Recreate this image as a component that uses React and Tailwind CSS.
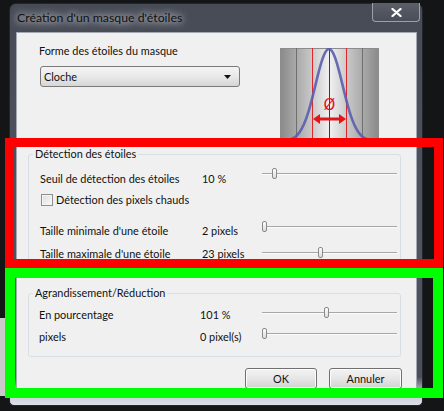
import React from "react";

// bell curve drawn into the preview panel
function bellPath() {
  const pts = [];
  for (let x = 0; x <= 98; x += 1) {
    const d = x - 49;
    const y = 1 + 92 * (1 - Math.exp(-(d * d) / (2 * 13.6 * 13.6)));
    pts.push(`${x === 0 ? "M" : "L"}${x},${y.toFixed(2)}`);
  }
  return pts.join(" ");
}

function Preview() {
  return (
    <svg width="99" height="96" viewBox="0 0 99 96" className="block">
      <defs>
        <linearGradient id="cyl" x1="0" y1="0" x2="1" y2="0">
          <stop offset="0" stopColor="#8a8a8a" />
          <stop offset="0.3" stopColor="#c4c4c4" />
          <stop offset="0.5" stopColor="#f1f1f1" />
          <stop offset="0.7" stopColor="#c4c4c4" />
          <stop offset="1" stopColor="#8a8a8a" />
        </linearGradient>
      </defs>
      <rect x="0.5" y="0.5" width="98" height="95" fill="url(#cyl)" stroke="#8c8c8c" />
      <line x1="16.5" y1="0" x2="16.5" y2="96" stroke="#6f6f6f" strokeWidth="1" />
      <line x1="82.5" y1="0" x2="82.5" y2="96" stroke="#6f6f6f" strokeWidth="1" />
      <line x1="32.5" y1="0" x2="32.5" y2="96" stroke="#e0262a" strokeWidth="1" />
      <line x1="66.5" y1="0" x2="66.5" y2="96" stroke="#e0262a" strokeWidth="1" />
      <line x1="49.5" y1="0" x2="49.5" y2="96" stroke="#3a3a3a" strokeWidth="1" />
      <path d={bellPath()} fill="none" stroke="#5a5eae" strokeWidth="2.6" strokeOpacity="0.9" />
      <text x="49.5" y="62" textAnchor="middle" fontSize="15" fill="#e3141a" fontFamily="DejaVu Sans, sans-serif">Ø</text>
      <line x1="39" y1="71" x2="60" y2="71" stroke="#e3141a" strokeWidth="3" />
      <polygon points="33,71 40,66 40,76" fill="#e3141a" />
      <polygon points="66,71 59,66 59,76" fill="#e3141a" />
    </svg>
  );
}

function Slider({ thumb, lift }) {
  return (
    <div className={`relative h-[12px] w-[135px] ${lift}`}>
      <div className="mt-[5px] h-[1px] bg-[#a7a7a7]" />
      <div className="h-[1px] bg-[#fbfbfb]" />
      <div
        className="absolute top-0 h-[11px] w-[5px] rounded-[2px] border border-[#8a8a8a] bg-gradient-to-b from-[#fdfdfd] to-[#dcdcdc]"
        style={{ left: thumb }}
      />
    </div>
  );
}

function Row({ label, value, thumb, lift, labelW, valueW }) {
  return (
    <div className="flex h-[20px] items-center">
      <div className={labelW}>{label}</div>
      <div className={valueW}>{value}</div>
      <Slider thumb={thumb} lift={lift} />
    </div>
  );
}

function WinButton({ children, width }) {
  return (
    <div
      className={`flex h-[21px] ${width} items-center justify-center rounded-[3px] border border-[#707070] bg-gradient-to-b from-[#f3f3f3] via-[#e6e6e6] to-[#d2d2d2] shadow-[inset_0_0_0_1px_#fcfcfc]`}
    >
      {children}
    </div>
  );
}

export default function App() {
  return (
    <div className="relative h-[411px] w-[444px] overflow-hidden bg-[#141517] pl-[9px] pt-[3px] text-[10.9px] leading-[16px] text-[#111] [font-family:Lato,sans-serif]">
      {/* bits of the desktop behind */}
      <div className="absolute left-0 top-[318px] h-[78px] w-[6px] bg-[#c9c9c9]" />

      {/* window */}
      <div className="flex w-[414px] flex-col rounded-t-[7px] rounded-b-[5px] border border-[#22252c] bg-[linear-gradient(to_bottom,#474b56_0%,#50545f_60%,#4b4f5a_93%,#c7cad3_97%,#dde0e7_100%)] pb-[7px]">
        {/* title bar */}
        <div className="flex h-[28px] items-center">
          <div className="pl-[7px] text-[12.3px] text-[#101010] [text-shadow:0_0_6px_#cdd1d8,0_0_10px_#cdd1d8]">
            Création d'un masque d'étoiles
          </div>
          <div className="-mt-[1px] ml-auto mr-[2px] flex h-[19px] w-[48px] items-center justify-center self-start rounded-b-[4px] border border-t-0 border-[#9ca0aa] bg-gradient-to-b from-[#5b5f6a] to-[#4a4e58]">
            <svg width="11" height="9" viewBox="0 0 11 9">
              <path d="M1.5 1 L9.5 8 M9.5 1 L1.5 8" stroke="#ffffff" strokeWidth="2.3" strokeLinecap="round" />
            </svg>
          </div>
        </div>

        {/* client area */}
        <div className="ml-[6px] mr-[5px] border border-[#a3a8b2] bg-[#f0f0f0] pb-[8px]">
          {/* shape picker + preview */}
          <div className="flex">
            <div className="w-[263px] pl-[22px] pt-[10px]">
              <div>Forme des étoiles du masque</div>
              <div className="ml-[1px] mt-[7px] flex h-[21px] w-[200px] items-center rounded-[3px] border border-[#7a7a7a] bg-gradient-to-b from-[#f4f4f4] via-[#e9e9e9] to-[#d6d6d6] pl-[3px] pr-[8px]">
                <span>Cloche</span>
                <svg className="ml-auto" width="7" height="4" viewBox="0 0 7 4">
                  <path d="M0 0 H7 L3.5 4 Z" fill="#111" />
                </svg>
              </div>
            </div>
            <div className="mt-[15px]">
              <Preview />
            </div>
          </div>

          {/* star detection */}
          <fieldset className="ml-[11px] mt-[2px] w-[373px] rounded-[3px] border border-[#d5dfe5] pb-[2px] pl-[11px] pt-[7px]">
            <legend className="-ml-[7px] px-[2px]">Détection des étoiles</legend>
            <Row label="Seuil de détection des étoiles" value="10 %" thumb={10} lift="mb-[10px]" labelW="w-[162px]" valueW="w-[60px]" />
            <div className="flex h-[21px] items-center">
              <div className="ml-[1px] h-[12px] w-[12px] border border-[#8e8f8f] bg-gradient-to-br from-[#dcdcdc] to-[#fbfbfb] shadow-[inset_0_0_0_1px_#f4f4f4]" />
              <span className="ml-[3px]">Détection des pixels chauds</span>
            </div>
            <div className="mt-[11px]">
              <Row label="Taille minimale d'une étoile" value="2 pixels" thumb={0} lift="mb-[8px]" labelW="w-[162px]" valueW="w-[60px]" />
            </div>
            <div className="mt-[3px]">
              <Row label="Taille maximale d'une étoile" value="23 pixels" thumb={56} lift="mb-[2px]" labelW="w-[162px]" valueW="w-[60px]" />
            </div>
          </fieldset>

          {/* resize */}
          <fieldset className="ml-[11px] mt-[18px] w-[373px] rounded-[3px] border border-[#d5dfe5] pb-[9px] pl-[10px] pt-[4px]">
            <legend className="-ml-[6px] px-[2px]">Agrandissement/Réduction</legend>
            <Row label="En pourcentage" value="101 %" thumb={62} lift="mb-[4px]" labelW="w-[161px]" valueW="w-[62px]" />
            <div className="mt-[2px]">
              <Row label="pixels" value="0 pixel(s)" thumb={0} lift="mb-[6px]" labelW="w-[161px]" valueW="w-[62px]" />
            </div>
          </fieldset>

          {/* buttons */}
          <div className="mt-[11px] flex justify-end gap-[12px] pr-[14px]">
            <WinButton width="w-[72px]">OK</WinButton>
            <WinButton width="w-[73px]">Annuler</WinButton>
          </div>
        </div>
      </div>

      {/* highlight frames drawn over the dialog */}
      <div className="absolute left-[5px] top-[138px] h-[130px] w-[438px] border-[9px] border-[#ff0000]" />
      <div className="absolute left-[5px] top-[268px] h-[130px] w-[438px] border-[10px] border-[#00ff00]" />
    </div>
  );
}
